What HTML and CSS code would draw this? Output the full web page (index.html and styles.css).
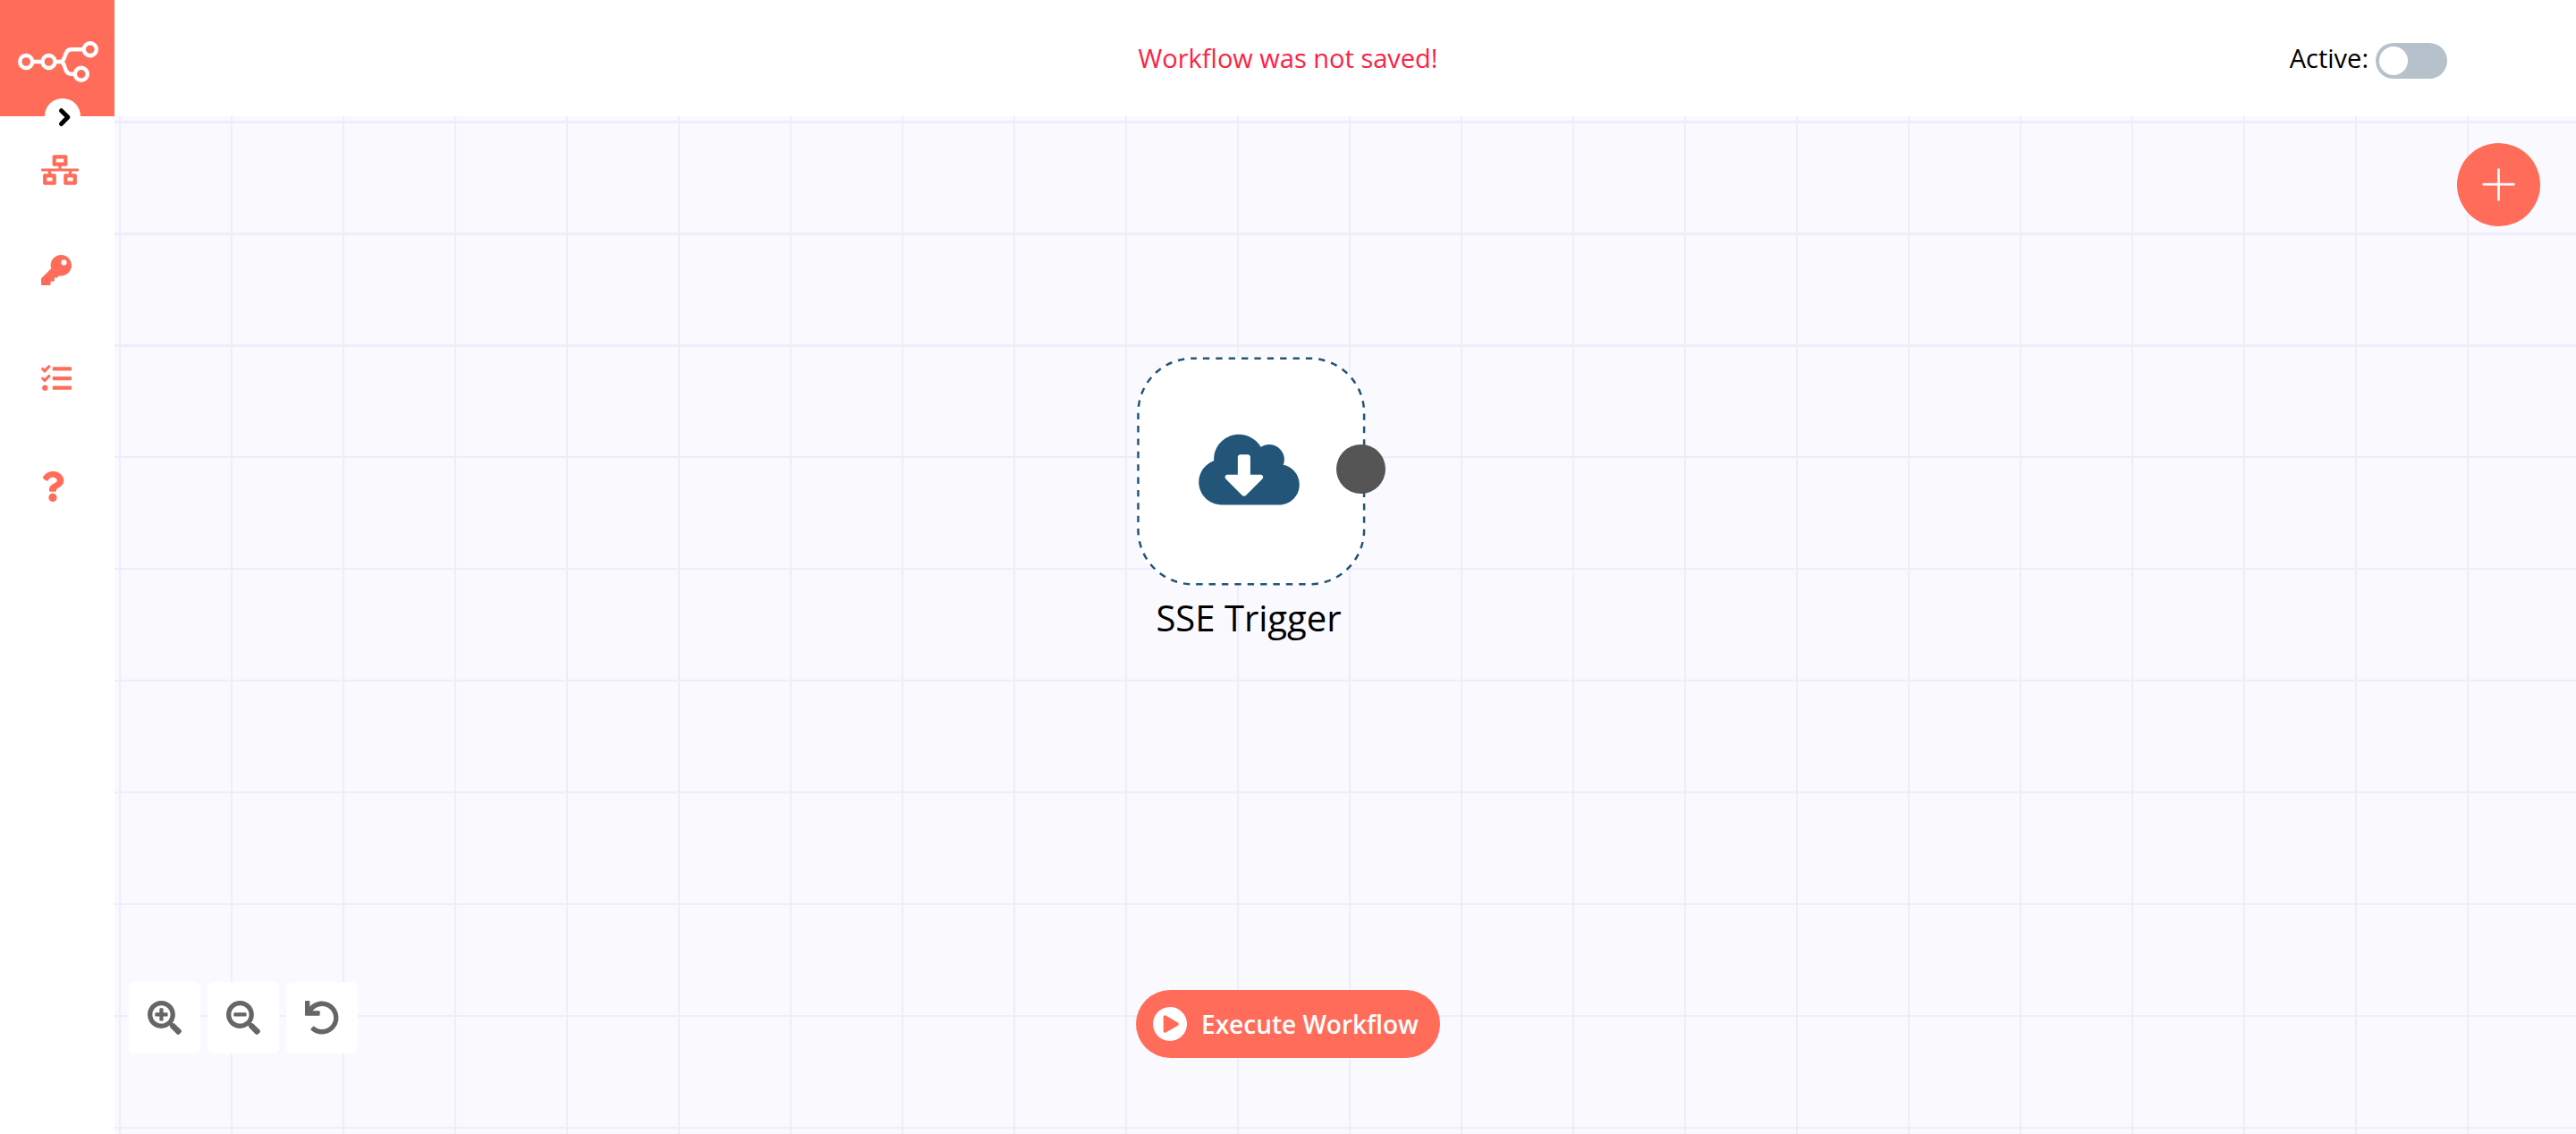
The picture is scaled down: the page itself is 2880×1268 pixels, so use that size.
FILE: index.html
```html
<!DOCTYPE html>
<html lang="en">
<head>
<meta charset="utf-8">
<title>Workflow editor</title>
<link rel="stylesheet" href="styles.css">
</head>
<body>
<div class="app">
  <header class="topbar">
    <a class="logo" href="#" aria-label="Home">
      <svg width="128" height="130" viewBox="0 0 128 130" fill="none" stroke="#fff" stroke-width="4.400">
        <circle cx="29.200" cy="69" r="7"/>
        <circle cx="54.500" cy="69" r="7"/>
        <circle cx="100.800" cy="55.200" r="7"/>
        <circle cx="90.800" cy="82.800" r="7"/>
        <path d="M37 69h10M62 69h5.500c6.500 0 3.500-13.700 12-13.700H93M67.500 69c6.500 0 3.500 13.700 11.500 13.700H83"/>
      </svg>
    </a>
    <p class="status">Workflow was not saved!</p>
    <label class="active"><span>Active:</span><input class="switch" type="checkbox" role="switch"></label>
    <button class="expand" type="button" aria-label="Expand menu">
      <svg width="40" height="40" viewBox="0 0 40 40" fill="none" stroke="#000" stroke-width="5" stroke-linejoin="round" stroke-linecap="round"><path d="M18.500 13.700l7.400 7.400-7.400 7.400"/></svg>
    </button>
  </header>

  <nav class="sidebar" aria-label="Main">
    <a class="item item-first" href="#" aria-label="Workflows">
      <svg width="42" height="34" viewBox="0 0 640 512"><path d="M640 264v-16c0-8.840-7.160-16-16-16H344v-40h72c17.670 0 32-14.330 32-32V32c0-17.670-14.330-32-32-32H224c-17.670 0-32 14.330-32 32v128c0 17.670 14.330 32 32 32h72v40H16c-8.840 0-16 7.160-16 16v16c0 8.840 7.160 16 16 16h104v40H64c-17.670 0-32 14.330-32 32v128c0 17.670 14.330 32 32 32h160c17.670 0 32-14.330 32-32V352c0-17.670-14.330-32-32-32h-56v-40h304v40h-56c-17.670 0-32 14.330-32 32v128c0 17.670 14.330 32 32 32h160c17.670 0 32-14.330 32-32V352c0-17.670-14.330-32-32-32h-56v-40h104c8.840 0 16-7.160 16-16zM256 128V64h128v64H256zm-64 320H96v-64h96v64zm352 0h-96v-64h96v64z"/></svg>
    </a>
    <a class="item" href="#" aria-label="Credentials">
      <svg width="34" height="34" viewBox="0 0 512 512"><path d="M512 176.001C512 273.203 433.202 352 336 352c-11.220 0-22.190-1.062-32.827-3.069l-24.012 27.014A23.999 23.999 0 0 1 261.223 384H224v40c0 13.255-10.745 24-24 24h-40v40c0 13.255-10.745 24-24 24H24c-13.255 0-24-10.745-24-24v-78.059c0-6.365 2.529-12.470 7.029-16.971l161.802-161.802C163.108 213.814 160 195.271 160 176 160 78.798 238.797.001 335.999 0 433.488-.001 512 78.511 512 176.001zM336 128c0 26.510 21.490 48 48 48s48-21.490 48-48-21.490-48-48-48-48 21.490-48 48z"/></svg>
    </a>
    <a class="item" href="#" aria-label="Executions">
      <svg width="34" height="34" viewBox="0 0 512 512"><path d="M139.610 35.500a12 12 0 0 0-17 0L58.930 98.810l-22.700-22.120a12 12 0 0 0-17 0L3.530 92.410a12 12 0 0 0 0 17l47.590 47.400a12.780 12.780 0 0 0 17.610 0l15.590-15.620L156.520 69a12.090 12.090 0 0 0 .09-17zm0 159.190a12 12 0 0 0-17 0l-63.680 63.720-22.700-22.100a12 12 0 0 0-17 0L3.530 252a12 12 0 0 0 0 17L51 316.500a12.770 12.770 0 0 0 17.600 0l15.700-15.690 72.200-72.220a12 12 0 0 0 .09-16.900zM64 368c-26.490 0-48.590 21.500-48.590 48S37.530 464 64 464a48 48 0 0 0 0-96zm432 16H208a16 16 0 0 0-16 16v32a16 16 0 0 0 16 16h288a16 16 0 0 0 16-16v-32a16 16 0 0 0-16-16zm0-320H208a16 16 0 0 0-16 16v32a16 16 0 0 0 16 16h288a16 16 0 0 0 16-16V80a16 16 0 0 0-16-16zm0 160H208a16 16 0 0 0-16 16v32a16 16 0 0 0 16 16h288a16 16 0 0 0 16-16v-32a16 16 0 0 0-16-16z"/></svg>
    </a>
    <a class="item" href="#" aria-label="Help">
      <svg width="26" height="34" viewBox="0 0 384 512"><path d="M202.021 0C122.202 0 70.503 32.703 29.914 91.026c-7.363 10.580-5.093 25.086 5.178 32.874l43.138 32.709c10.373 7.865 25.132 6.026 33.253-4.148 25.049-31.381 43.630-49.449 82.757-49.449 30.764 0 68.816 19.799 68.816 49.631 0 22.552-18.617 34.134-48.993 51.164-35.423 19.860-82.299 44.576-82.299 106.405V320c0 13.255 10.745 24 24 24h72.471c13.255 0 24-10.745 24-24v-5.773c0-42.860 125.268-44.645 125.268-160.627C377.504 66.256 286.902 0 202.021 0zM192 373.459c-38.196 0-69.271 31.075-69.271 69.271 0 38.195 31.075 69.270 69.271 69.270s69.271-31.075 69.271-69.271-31.075-69.270-69.271-69.270z"/></svg>
    </a>
  </nav>

  <main class="canvas">
    <section class="node">
      <div class="node-box">
        <svg class="node-outline" width="256" height="256" viewBox="0 0 256 256"><rect width="255" height="256" rx="62" fill="#fff"/><rect x="1.500" y="1.700" width="252.600" height="252.600" rx="61" fill="none" stroke="#225577" stroke-width="2.500" stroke-dasharray="7.400 6.976" stroke-dashoffset="3"/></svg>
        <svg class="node-icon" width="113" height="90" viewBox="0 0 640 512"><path d="M537.600 226.600c4.100-10.700 6.400-22.400 6.400-34.600 0-53-43-96-96-96-19.700 0-38.100 6-53.300 16.200C367 64.200 315.300 32 256 32c-88.400 0-160 71.600-160 160 0 2.700.1 5.400.2 8.100C40.200 219.800 0 273.200 0 336c0 79.500 64.500 144 144 144h368c70.700 0 128-57.300 128-128 0-61.900-44-113.600-102.400-125.400zm-132.900 88.700L299.300 420.700c-6.200 6.200-16.400 6.200-22.600 0L171.300 315.300c-10.100-10.100-2.900-27.300 11.300-27.300H248V176c0-8.800 7.200-16 16-16h48c8.800 0 16 7.200 16 16v112h65.400c14.200 0 21.400 17.200 11.300 27.300z"/></svg>
        <span class="endpoint"></span>
      </div>
      <h2 class="node-name">SSE Trigger</h2>
    </section>

    <button class="add" type="button" aria-label="Add node">
      <svg width="37" height="37" viewBox="0 0 37 37" stroke="#fff" stroke-width="2.700" stroke-linecap="round"><path d="M18.500 1.700v33.600M1.700 18.200h33.600"/></svg>
    </button>

    <div class="zoom">
      <button class="zoom-button" type="button" aria-label="Zoom in">
        <svg width="38" height="38" viewBox="0 0 512 512"><path d="M304 192v32c0 6.600-5.400 12-12 12h-56v56c0 6.600-5.400 12-12 12h-32c-6.600 0-12-5.400-12-12v-56h-56c-6.600 0-12-5.400-12-12v-32c0-6.600 5.400-12 12-12h56v-56c0-6.600 5.400-12 12-12h32c6.600 0 12 5.400 12 12v56h56c6.600 0 12 5.400 12 12zm201 284.700L476.700 505c-9.400 9.400-24.600 9.400-33.900 0L343 405.300c-4.500-4.500-7-10.600-7-17V372c-35.300 27.600-79.700 44-128 44C93.100 416 0 322.900 0 208S93.100 0 208 0s208 93.100 208 208c0 48.300-16.400 92.700-44 128h16.300c6.400 0 12.500 2.500 17 7l99.700 99.700c9.300 9.400 9.300 24.600 0 34zM344 208c0-75.200-60.800-136-136-136S72 132.800 72 208s60.800 136 136 136 136-60.800 136-136z"/></svg>
      </button>
      <button class="zoom-button" type="button" aria-label="Zoom out">
        <svg width="38" height="38" viewBox="0 0 512 512"><path d="M304 192v32c0 6.600-5.400 12-12 12H124c-6.600 0-12-5.400-12-12v-32c0-6.600 5.400-12 12-12h168c6.600 0 12 5.400 12 12zm201 284.700L476.700 505c-9.400 9.400-24.600 9.400-33.900 0L343 405.300c-4.500-4.500-7-10.600-7-17V372c-35.300 27.600-79.700 44-128 44C93.100 416 0 322.900 0 208S93.100 0 208 0s208 93.100 208 208c0 48.300-16.400 92.700-44 128h16.300c6.400 0 12.500 2.500 17 7l99.700 99.700c9.300 9.400 9.300 24.600 0 34zM344 208c0-75.200-60.800-136-136-136S72 132.800 72 208s60.800 136 136 136 136-60.800 136-136z"/></svg>
      </button>
      <button class="zoom-button" type="button" aria-label="Reset zoom">
        <svg width="38" height="38" viewBox="0 0 512 512"><path d="M212.333 224.333H12c-6.627 0-12-5.373-12-12V12C0 5.373 5.373 0 12 0h48c6.627 0 12 5.373 12 12v78.112C117.773 39.279 184.260 7.470 258.175 8.007c136.906.994 246.448 111.623 246.157 248.532C504.041 393.258 393.120 504 256.333 504c-64.089 0-122.496-24.313-166.510-64.215-5.099-4.622-5.334-12.554-.467-17.420l33.967-33.967c4.474-4.474 11.662-4.717 16.401-.525C170.760 415.336 211.580 432 256.333 432c97.268 0 176-78.716 176-176 0-97.267-78.716-176-176-176-58.496 0-110.280 28.476-142.274 72.333h98.274c6.627 0 12 5.373 12 12v48c0 6.627-5.373 12-12 12z"/></svg>
      </button>
    </div>

    <button class="execute" type="button">
      <svg width="38" height="38" viewBox="8 8 496 496"><path d="M256 8C119 8 8 119 8 256s111 248 248 248 248-111 248-248S393 8 256 8zm115.700 272l-176 101c-15.800 8.800-35.700-2.500-35.700-21V152c0-18.400 19.800-29.800 35.700-21l176 107c16.400 9.200 16.400 32.900 0 42z"/></svg>
      <span>Execute Workflow</span>
    </button>
  </main>
</div>
</body>
</html>
```
FILE: styles.css
```css
* {
  box-sizing: border-box;
}

body {
  margin: 0;
  font-family: "Open Sans", "Noto Sans", sans-serif;
  font-size: 28px;
  line-height: 40px;
  color: #000;
}

button {
  padding: 0;
  border: 0;
  font: inherit;
  cursor: pointer;
}

svg {
  display: block;
  flex: none;
}

.app {
  display: grid;
  grid-template-columns: 128px 1fr;
  grid-template-rows: 130px 1fr;
  min-height: 100vh;
}

/* Top bar */
.topbar {
  position: relative;
  z-index: 2;
  grid-column: 1 / -1;
  display: grid;
  grid-template-columns: 1fr auto 1fr;
  align-items: center;
  background: #fff;
  font-size: 29px;
}

.logo {
  justify-self: start;
  background: #ff6d5a;
}

.status {
  margin: 0;
  color: #ff2244;
}

.active {
  justify-self: end;
  display: flex;
  align-items: center;
  gap: 8px;
  padding-right: 144px;
}

.switch {
  appearance: none;
  display: flex;
  width: 80px;
  height: 40px;
  margin: 6px 0 0;
  padding: 4px;
  border-radius: 20px;
  background: #b7c1cb;
}

.switch::before {
  content: "";
  width: 32px;
  height: 32px;
  border-radius: 50%;
  background: #fff;
}

.switch:checked {
  justify-content: flex-end;
  background: #ff6d5a;
}

.expand {
  position: absolute;
  left: 50px;
  bottom: -20px;
  border-radius: 50%;
  background: #fff;
}

/* Side menu */
.sidebar {
  z-index: 1;
  grid-area: 2 / 1;
  display: flex;
  flex-direction: column;
  gap: 87px;
  padding: 43px 0 0 46px;
  background: #fff;
}

.item {
  height: 34px;
  fill: #ff6d5a;
}

.item-first {
  height: 25px;
}

/* Canvas */
.canvas {
  position: relative;
  grid-area: 2 / 1 / 3 / 3;
  background-color: #faf9fe;
  background-image:
    linear-gradient(transparent 7px, #eeecfd 7px 8px, transparent 8px 132px, #eeecfd 132px 133px, transparent 133px 257px, #eeecfd 257px 258px, transparent 258px),
    linear-gradient(#eeecfd 2px, transparent 2px),
    linear-gradient(90deg, #eeecfd 2px, transparent 2px);
  background-size: auto, 125px 125px, 125px 125px;
  background-position: 0 0, 8px 5px, 8px 5px;
}

.node {
  position: absolute;
  left: 1271px;
  top: 269px;
  width: 250px;
}

.node-box {
  position: relative;
  display: grid;
  place-items: center;
  height: 252px;
}

.node-outline {
  position: absolute;
  left: 0;
  top: 0;
}

.node-icon {
  position: relative;
  fill: #225577;
}

.endpoint {
  position: absolute;
  right: -28px;
  top: 98px;
  width: 55px;
  height: 55px;
  border-radius: 50%;
  background: #555;
}

.node-name {
  margin: 12px 0 0;
  font-size: 40px;
  font-weight: 400;
  line-height: 56px;
  text-align: center;
}

.add {
  position: absolute;
  top: 30px;
  right: 40px;
  display: grid;
  place-items: center;
  width: 93px;
  height: 93px;
  border-radius: 50%;
  background: #ff6d5a;
}

.zoom {
  position: absolute;
  left: 144px;
  bottom: 90px;
  display: flex;
  gap: 8px;
}

.zoom-button {
  display: grid;
  place-items: center;
  width: 80px;
  height: 80px;
  border-radius: 6px;
  background: #fff;
  fill: #666;
}

.execute {
  position: absolute;
  left: 50%;
  bottom: 85px;
  transform: translateX(-50%);
  display: flex;
  align-items: center;
  gap: 16px;
  height: 76px;
  padding: 0 24px 0 19px;
  border-radius: 38px;
  background: #ff6d5a;
  color: #fff;
  fill: #fff;
  font-weight: 600;
  white-space: nowrap;
}
```
